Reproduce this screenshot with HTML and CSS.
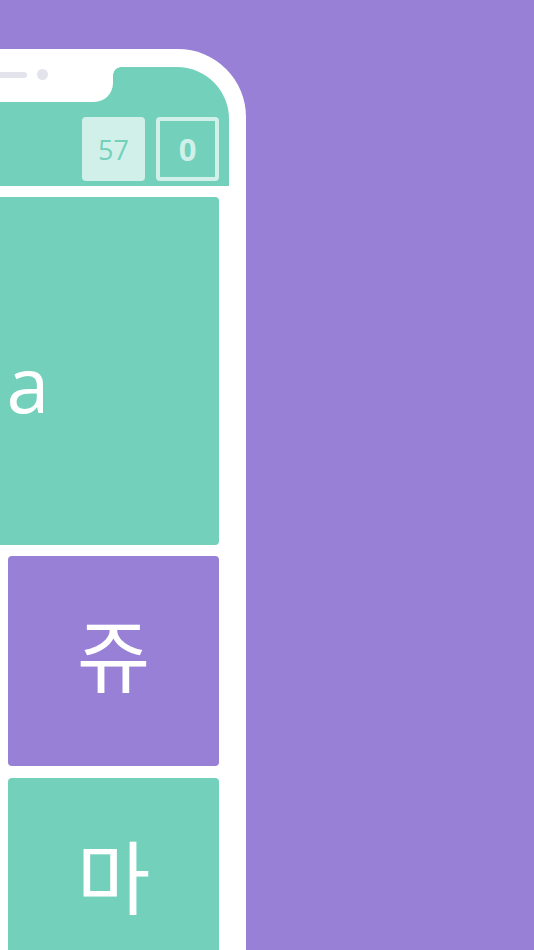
FILE: index.html
```html
<!DOCTYPE html>
<html lang="ko">
<head>
<meta charset="utf-8">
<title>Hangul quiz</title>
<link rel="stylesheet" href="styles.css">
</head>
<body>
<div class="phone">
  <div class="notch"><span class="speaker"></span><span class="camera"></span></div>
  <div class="screen">
    <header class="bar">
      <div class="score">57</div>
      <div class="streak">0</div>
    </header>
    <main class="board">
      <div class="prompt">a</div>
      <div class="choices">
        <div class="choice purple"></div>
        <div class="choice purple">쥬</div>
        <div class="choice green"></div>
        <div class="choice green">마</div>
      </div>
    </main>
  </div>
</div>
</body>
</html>
```
FILE: styles.css
```css
html, body {
  margin: 0;
  padding: 0;
}
body {
  width: 534px;
  height: 950px;
  overflow: hidden;
  background: #9880d6;
  font-family: "Open Sans", "Noto Sans", sans-serif;
}
.phone {
  position: relative;
  box-sizing: border-box;
  width: 500px;
  height: 1000px;
  margin: 49px 0 0 -254px;
  padding: 18px 17px 0;
  background: #ffffff;
  border-radius: 68px 68px 0 0;
}
.notch {
  position: absolute;
  top: 18px;
  left: 133px;
  width: 234px;
  height: 35px;
  box-sizing: border-box;
  padding: 2px 0 0 88px;
  display: flex;
  align-items: flex-start;
  gap: 10px;
  background: #ffffff;
  border-radius: 0 0 19px 19px;
  z-index: 2;
}
.notch::before,
.notch::after {
  content: "";
  position: absolute;
  top: 0;
  width: 8px;
  height: 8px;
}
.notch::after {
  left: 100%;
  background: radial-gradient(circle at 100% 100%, transparent 7.5px, #ffffff 8px);
}
.notch::before {
  right: 100%;
  background: radial-gradient(circle at 0 100%, transparent 7.5px, #ffffff 8px);
}
.speaker {
  width: 60px;
  height: 6px;
  margin-top: 3px;
  border-radius: 3px;
  background: #e3e3eb;
}
.camera {
  width: 11px;
  height: 11px;
  border-radius: 50%;
  background: #e3e3eb;
}
.screen {
  border-radius: 52px 52px 0 0;
  overflow: hidden;
  background: #ffffff;
}
.bar {
  box-sizing: border-box;
  height: 119px;
  padding: 0 10px 5px;
  display: flex;
  justify-content: flex-end;
  align-items: flex-end;
  gap: 11px;
  background: #73d1bb;
}
.score,
.streak {
  box-sizing: border-box;
  width: 63px;
  height: 64px;
  border-radius: 4px;
  display: flex;
  align-items: center;
  justify-content: center;
  font-family: "Open Sans", sans-serif;
  line-height: 1;
}
.score {
  background: #d0f0e9;
  color: #73d1bb;
  font-size: 27px;
  font-weight: 400;
}
.streak {
  border: 4px solid #d0f0e9;
  color: #d0f0e9;
  font-size: 31px;
  font-weight: 700;
}
.board {
  padding: 11px 10px 0;
  display: flex;
  flex-direction: column;
  gap: 11px;
}
.prompt {
  box-sizing: border-box;
  height: 348px;
  padding: 24px 0 0 64px;
  border-radius: 4px;
  background: #73d1bb;
  color: #ffffff;
  display: flex;
  align-items: center;
  justify-content: center;
  font-family: "Open Sans", sans-serif;
  font-size: 77px;
  font-weight: 500;
}
.choices {
  display: grid;
  grid-template-columns: 1fr 211px;
  grid-auto-rows: 210px;
  column-gap: 11px;
  row-gap: 12px;
}
.choice {
  box-sizing: border-box;
  padding-bottom: 20px;
  border-radius: 4px;
  color: #ffffff;
  display: flex;
  align-items: center;
  justify-content: center;
  font-family: "Noto Sans CJK KR", "Noto Sans", sans-serif;
  font-size: 80px;
  font-weight: 400;
  line-height: 1;
}
.purple {
  background: #9880d6;
}
.green {
  background: #73d1bb;
}
```
